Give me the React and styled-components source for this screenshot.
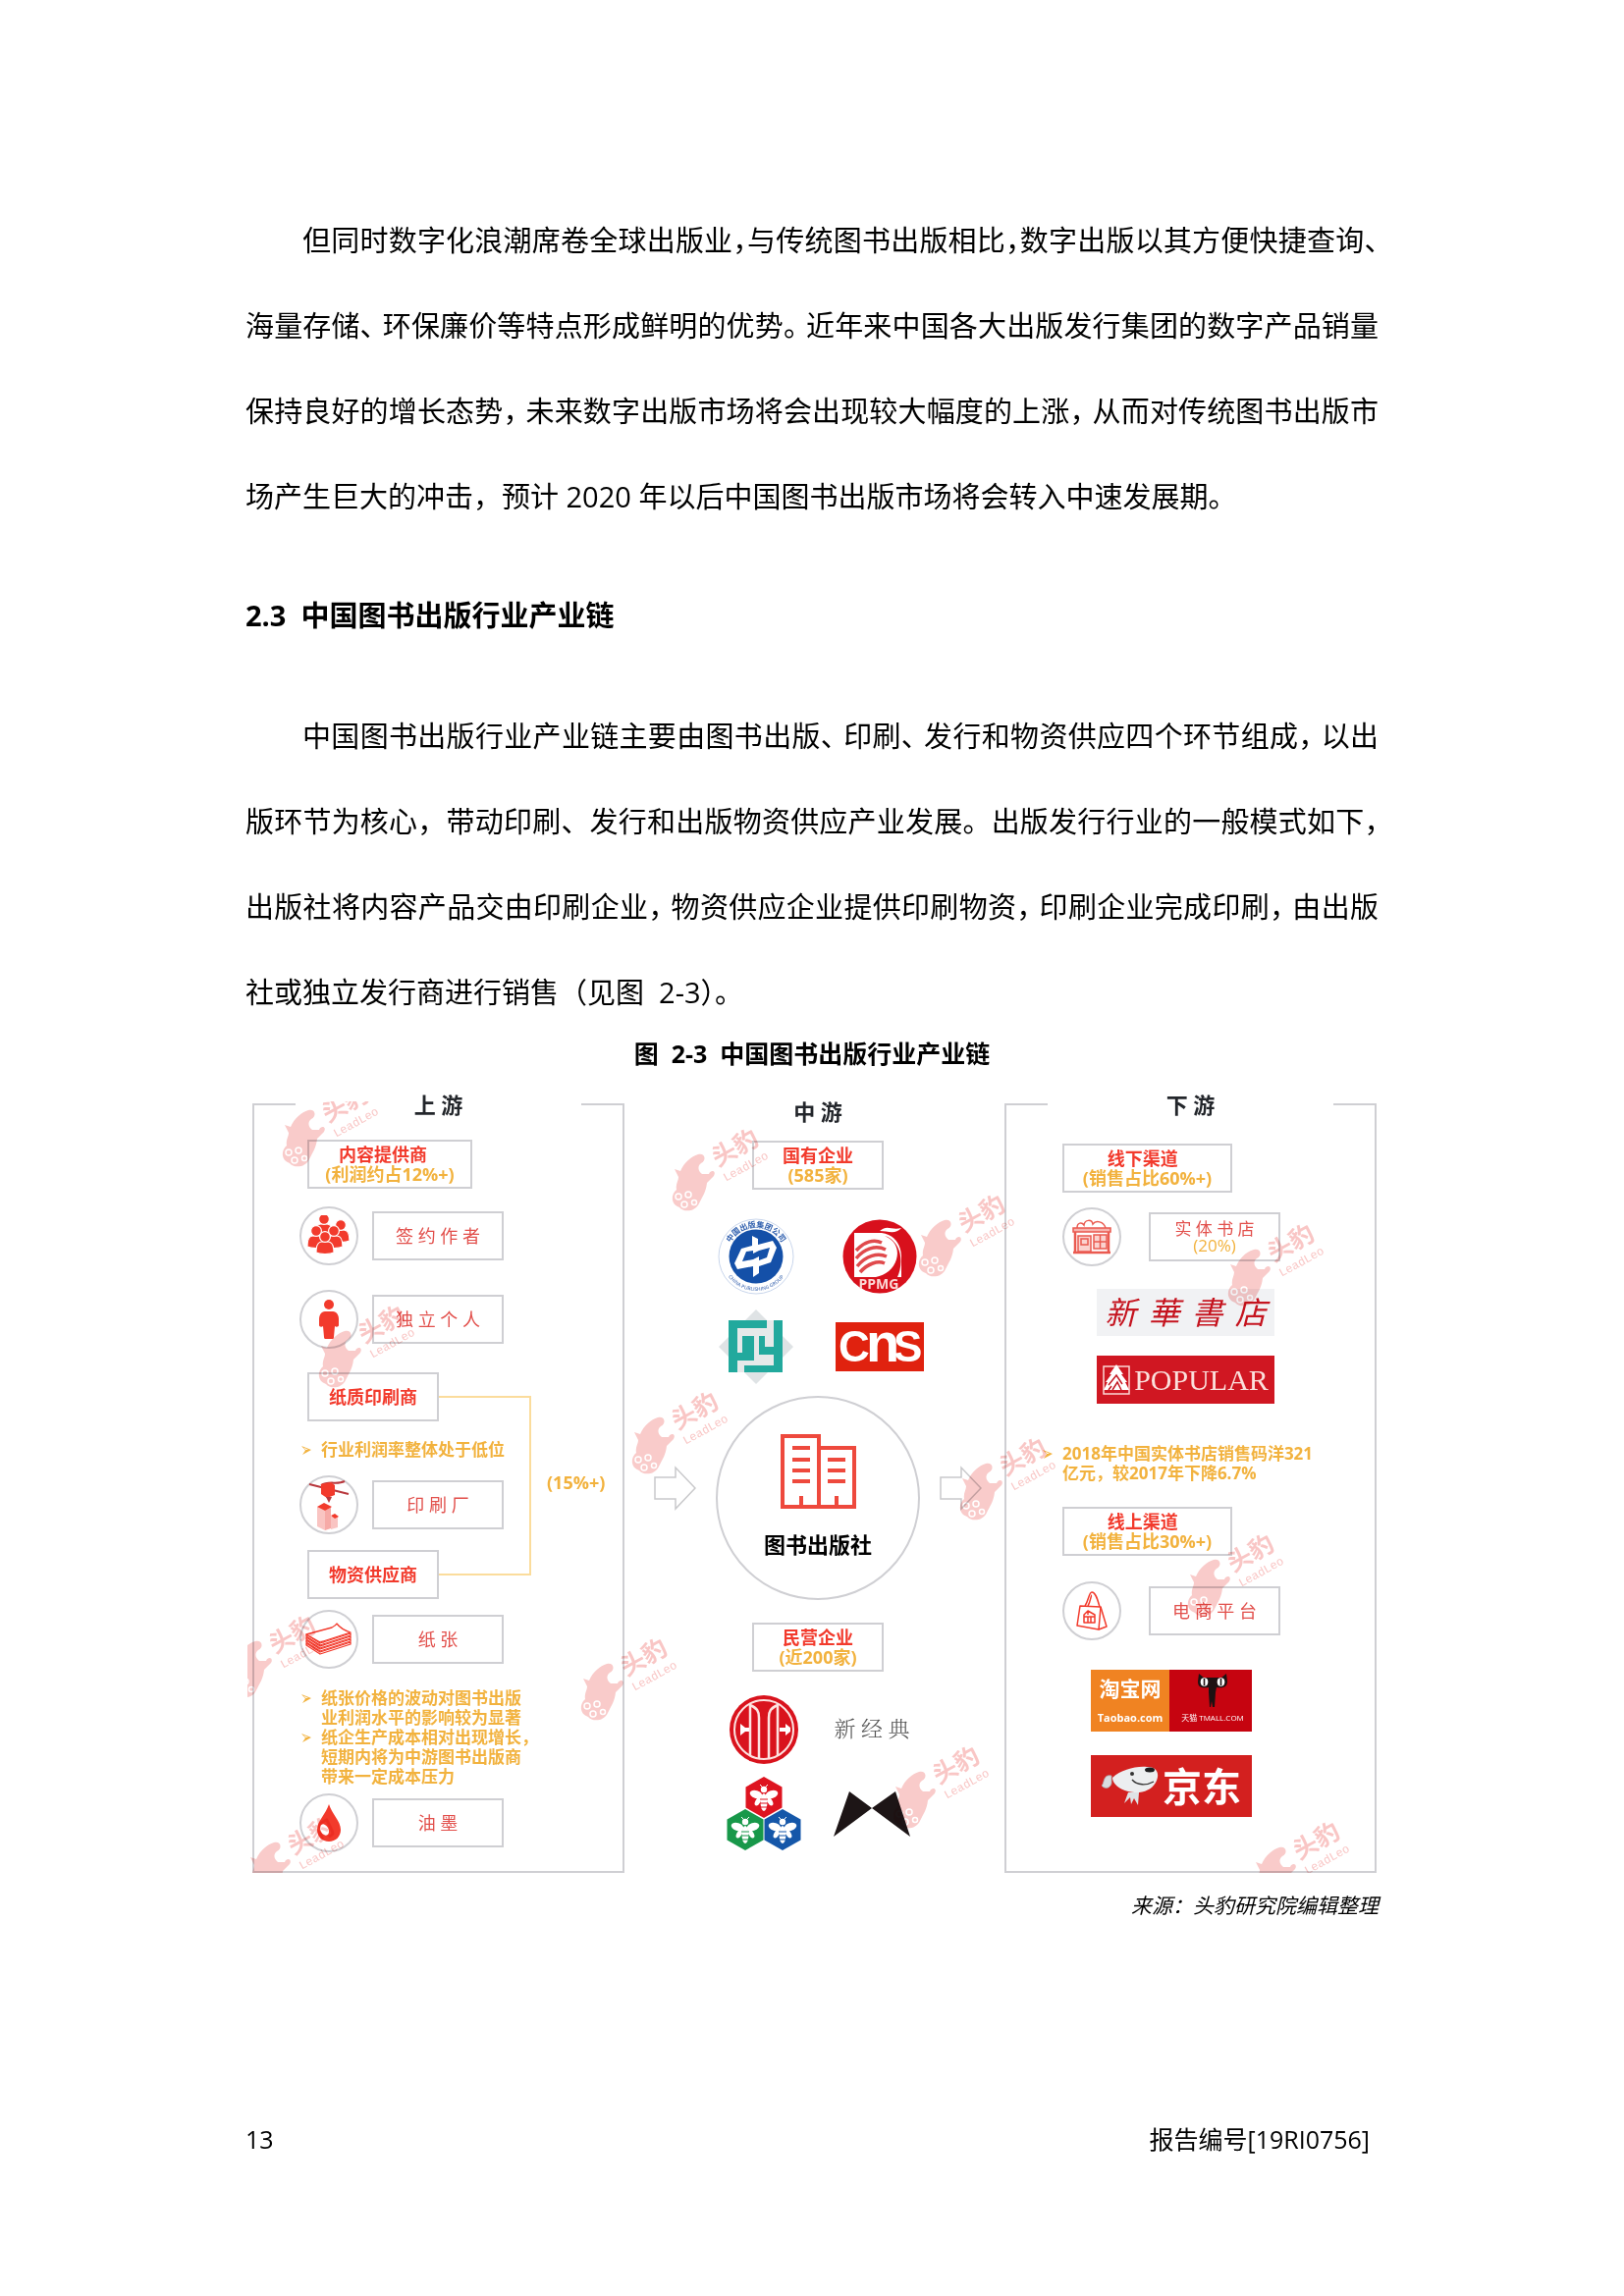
import React from "react";
import styled, { createGlobalStyle } from "styled-components";

const red = "#f23a2c";
const softRed = "#e2504c";
const amber = "#f2b23e";
const line = "#cfcfd3";

const GlobalStyle = createGlobalStyle`
  body {
    margin: 0;
    background: #fff;
    color: #000;
    font-family: "Open Sans", "Noto Sans CJK SC", sans-serif;
  }
`;

const Page = styled.main`
  max-width: 1154px;
  margin: 0 auto;
  padding: 201px 0 140px;
`;

const Paragraph = styled.p`
  margin: 0;
  font-size: 29px;
  line-height: 87px;
  text-indent: 2em;
  text-align: justify;
`;

/* Punctuation set narrower than a full em, as in justified Chinese text. */
const Mark = styled.span`
  margin-right: -6px;
`;

/* Punctuation set on half an em. */
const HalfMark = styled.span`
  font-feature-settings: "halt";
`;

const Heading = styled.h2`
  margin: 56px 0 58px;
  font-size: 29px;
  line-height: 43px;
  font-weight: 700;
`;

const Figure = styled.figure`
  display: flex;
  flex-direction: column;
  margin: 0;
`;

const Caption = styled.figcaption`
  margin-bottom: 20px;
  font-size: 25px;
  line-height: 38px;
  font-weight: 700;
  text-align: center;
`;

const Chain = styled.div`
  position: relative;
  display: grid;
  grid-template-columns: 379fr 387fr 379fr;
  margin: 0 2px 0 7px;
`;

const Panel = styled.section`
  display: flex;
  flex-direction: column;
`;

const PanelHead = styled.header`
  display: grid;
  grid-template-columns: 44px 1fr 44px;
  align-items: center;
  margin-bottom: -14px;
`;

const Stub = styled.span`
  height: 2px;
  background: ${line};
`;

const StageTitle = styled.h3`
  margin: 0;
  font-size: 22px;
  line-height: 26px;
  font-weight: 700;
  color: #23262b;
  text-align: center;
`;

const PanelBody = styled.div`
  flex: 1;
  display: flex;
  flex-direction: column;
  align-items: flex-start;
  border: solid ${line};
  border-width: 0 2px 2px;
  padding: ${(p) => p.$pad};
`;

const Middle = styled.section`
  display: flex;
  flex-direction: column;
  align-items: center;
  padding: 7px 0 0 7px;
`;

const Box = styled.div`
  box-sizing: border-box;
  display: flex;
  flex-direction: column;
  align-items: center;
  justify-content: center;
  width: ${(p) => p.$width || "134px"};
  height: 50px;
  margin-top: ${(p) => p.$top || "0"};
  margin-left: ${(p) => p.$inset || "0"};
  border: 2px solid ${line};
  font-size: 18px;
  line-height: 20px;
  font-weight: ${(p) => (p.$plain ? 400 : 700)};
  color: ${(p) => (p.$plain ? softRed : red)};
  white-space: nowrap;
`;

const Share = styled.span`
  color: ${amber};
`;

const Tight = styled.span`
  font-size: 17px;
  line-height: 17px;
  color: ${(p) => (p.$amber ? amber : "inherit")};
`;

const Row = styled.div`
  display: flex;
  align-items: center;
  gap: ${(p) => p.$gap || "14px"};
  margin-top: ${(p) => p.$top};
`;

const Disc = styled.span`
  box-sizing: border-box;
  display: grid;
  place-items: center;
  width: 60px;
  height: 60px;
  border: 2px solid ${line};
  border-radius: 50%;
`;

const Notes = styled.ul`
  list-style: none;
  width: ${(p) => p.$width};
  margin: ${(p) => p.$top} 0 0 ${(p) => p.$inset};
  padding: 0;
  font-size: 17px;
  line-height: 20px;
  font-weight: 700;
  color: ${amber};
`;

const Note = styled.li`
  display: grid;
  grid-template-columns: 20px 1fr;
  svg {
    margin-top: 6px;
  }
`;

const Linked = styled.div`
  position: relative;
  align-self: stretch;
  margin-top: 24px;
`;

const Bracket = styled.div`
  position: absolute;
  top: 24px;
  bottom: 24px;
  left: 142px;
  width: 92px;
  border: 2px solid #fbdc9c;
  border-left: 0;
`;

const BracketLabel = styled.span`
  position: absolute;
  top: 100px;
  left: 252px;
  font-size: 18px;
  line-height: 24px;
  font-weight: 700;
  color: ${amber};
`;

const Logos = styled.div`
  display: grid;
  grid-template-columns: repeat(2, ${(p) => p.$col});
  grid-template-rows: ${(p) => p.$rows};
  place-items: center;
  margin-top: ${(p) => p.$top};
`;

const Hub = styled.div`
  display: flex;
  align-items: center;
  gap: 20px;
  margin-top: 4px;
`;

const ArrowSlot = styled.span`
  display: flex;
  padding-bottom: 20px;
`;

const HubDisc = styled.div`
  box-sizing: border-box;
  display: flex;
  flex-direction: column;
  align-items: center;
  gap: 21px;
  width: 208px;
  height: 208px;
  padding-top: 37px;
  border: 2px solid ${line};
  border-radius: 50%;
  font-size: 22px;
  line-height: 30px;
  font-weight: 700;
`;

const Wordmark = styled.span`
  font-family: "Liberation Serif", "Noto Serif CJK SC", "Noto Sans CJK SC", serif;
  font-size: 22px;
  line-height: 30px;
  font-weight: 300;
  color: #555;
`;

const Banner = styled.div`
  box-sizing: border-box;
  display: flex;
  align-items: center;
  justify-content: ${(p) => p.$justify || "center"};
  gap: 4px;
  width: ${(p) => p.$width};
  height: ${(p) => p.$height};
  margin: ${(p) => p.$top} 0 0 ${(p) => p.$inset};
  background: ${(p) => p.$bg};
  color: ${(p) => p.$color || "#fff"};
`;

const Brush = styled.span`
  font-size: 32px;
  line-height: 40px;
  font-style: italic;
`;

const PopularText = styled.span`
  font-family: "Liberation Serif", serif;
  font-size: 30px;
  line-height: 40px;
`;

const Half = styled.div`
  flex: 1;
  align-self: stretch;
  display: flex;
  flex-direction: column;
  align-items: center;
  justify-content: space-between;
  box-sizing: border-box;
  padding: ${(p) => p.$pad};
  background: ${(p) => p.$bg};
  white-space: nowrap;
`;

const BrandText = styled.span`
  font-size: ${(p) => p.$size};
  line-height: 1;
  font-weight: ${(p) => p.$weight || 700};
`;

const WatermarkLayer = styled.div`
  position: absolute;
  inset: 10px -2px 0 -5px;
  overflow: hidden;
  pointer-events: none;
  mix-blend-mode: multiply;
`;

const MarkSlot = styled.svg`
  position: absolute;
  overflow: visible;
`;

const Source = styled.p`
  margin: 18px 0 0;
  font-size: 21px;
  line-height: 30px;
  font-style: italic;
  text-align: right;
`;

const Footer = styled.footer`
  display: flex;
  justify-content: space-between;
  margin-top: 205px;
  padding-right: 9px;
  font-size: 25px;
  line-height: 36px;
`;

const Bullet = () => (
  <svg width="10" height="9" viewBox="0 0 10 9" aria-hidden="true">
    <path d="M0 0 L10 4 L1 9 L4 4.5 Z" fill={amber} />
    <path d="M1.6 1.4 L7 3.8 L4.4 3.9 Z" fill="#fff" />
  </svg>
);

const Person = ({ x, y }) => (
  <g transform={`translate(${x} ${y})`} stroke="#fff" strokeWidth="1.2">
    <path d="M-9 20 C-9 12 -7 9 -3 9 L3 9 C7 9 9 12 9 20 C5 22 -5 22 -9 20 Z" />
    <circle cx="0" cy="4" r="5.4" />
  </g>
);

const PeopleIcon = () => (
  <svg width="46" height="42" viewBox="0 0 46 42" fill={red} aria-hidden="true">
    <Person x={18} y={0} />
    <Person x={35} y={6} />
    <Person x={10} y={12} />
    <Person x={28} y={12} />
    <Person x={19} y={18} />
  </svg>
);

const ManIcon = () => (
  <svg width="22" height="42" viewBox="0 0 22 42" fill={red} aria-hidden="true">
    <circle cx="11" cy="6" r="5" />
    <path d="M7 13 H15 C19 13 21 17 21 21 V27 C21 29 18 29 17 28 L16 39 C16 41 15 41 14 41 H8 C7 41 6 41 6 39 L5 28 C4 29 1 29 1 27 V21 C1 17 3 13 7 13 Z" />
  </svg>
);

const PrinterIcon = () => (
  <svg width="44" height="52" viewBox="0 0 44 52" aria-hidden="true">
    <path d="M2 5 L42 15 M14 6 C22 1 30 6 38 2" stroke="#b8373c" strokeWidth="2" fill="none" />
    <path d="M14 5 L24 3 L28 6 V16 L20 19 L14 15 Z" fill={red} />
    <path d="M19 18 H25 L22 24 Z" fill="#b8373c" />
    <path d="M10 28 L18 32 V52 L10 48 Z" fill="#f9c4c2" />
    <path d="M18 32 L24 28 V50 L18 52 Z" fill="#f6aaa7" />
    <path d="M10 28 L17 24 L25 28 L18 32 Z" fill={red} />
    <path d="M24 38 L31 38 V49 L24 51 Z" fill="#f9c4c2" />
    <path d="M24 37 L28 35 L32 38 L28 40 Z" fill={red} />
  </svg>
);

const PaperIcon = () => (
  <svg width="48" height="34" viewBox="0 0 48 34" fill="#fff" stroke={red} strokeWidth="1.3" strokeLinejoin="round" aria-hidden="true">
    {[12, 9, 6, 3].map((d) => (
      <path key={d} d={`M1 ${11 + d} L15 ${20 + d} L46 ${10 + d} V${8 + d} L15 ${18 + d} L1 ${9 + d} Z`} />
    ))}
    <path d="M1 12 L27 5 C29 4 31 3 32 1 C35 5 40 8 46 10 L15 20 Z" />
  </svg>
);

const DropIcon = () => (
  <svg width="26" height="40" viewBox="0 0 26 40" aria-hidden="true">
    <path d="M13 1 C16 11 25 18 25 27 C25 34 20 39 13 39 C6 39 1 34 1 27 C1 18 10 11 13 1 Z" fill={red} />
    <ellipse cx="8.5" cy="27" rx="4" ry="6" fill="#fff" transform="rotate(-28 8.5 27)" />
  </svg>
);

const ShopIcon = () => (
  <svg width="40" height="36" viewBox="0 0 40 36" fill="none" stroke="#ea5a50" strokeWidth="1.5" aria-hidden="true">
    <path d="M5 9 C5 3 10 3 12 6 C13 0 20 0 21 5 C24 1 32 2 34 9" />
    <path d="M1 9 H39 V13 H1 Z" fill="#f7b3ae" />
    <path d="M3 13 V33 M37 13 V33 M1 34 H39" strokeWidth="2.5" />
    <rect x="6" y="17" width="13" height="16" fill="#fbd2cf" />
    <rect x="9" y="20" width="7" height="6" />
    <rect x="22" y="16" width="13" height="14" fill="#fbd2cf" />
    <path d="M28.5 16 V30 M22 23 H35" />
  </svg>
);

const BagIcon = () => (
  <svg width="32" height="40" viewBox="0 0 32 40" fill="none" stroke={red} strokeWidth="1.5" strokeLinejoin="round" aria-hidden="true">
    <path d="M4 15 L25 16 L23 39 L1 35 Z" />
    <path d="M25 16 L31 36 L23 39" />
    <path d="M9 15 C13 9 13 1 16 1 C20 1 22 9 24 16 M12 15 C15 10 15 4 16 4" />
    <path d="M8 24 L12 20 L19 24 V32 H8 Z M8 26 H19 M12 26 V32 M15 26 V32 M12 20 V24" />
  </svg>
);

const BuildingIcon = () => (
  <svg width="77" height="76" viewBox="0 0 77 76" fill="none" stroke="#ee493d" strokeWidth="4" aria-hidden="true">
    <path d="M2 2 H39 V74 H2 Z M39 14 H75 V74 H39" />
    <path d="M12 14 H30 M12 26 H30 M12 37 H30 M12 48 H30 M48 26 H66 M48 37 H66 M48 48 H66" />
    <path d="M21 63 V74 M57 63 V74" />
  </svg>
);

const Arrow = () => (
  <svg width="43" height="46" viewBox="0 0 43 46" fill="none" stroke="#c9c9cb" strokeWidth="1.5" aria-hidden="true">
    <path d="M1 12 H22 V2 L42 23 L22 44 V34 H1 Z" />
  </svg>
);

const PublishingGroupLogo = () => (
  <svg width="78" height="78" viewBox="0 0 78 78" role="img" aria-label="中国出版集团公司">
    <defs>
      <path id="arc-top" d="M9.5 39 A29.5 29.5 0 0 1 68.5 39" />
      <path id="arc-bottom" d="M4 39 A35 35 0 0 0 74 39" />
    </defs>
    <circle cx="39" cy="39" r="38" fill="#fff" stroke="#c9d6ec" strokeWidth="1" />
    <circle cx="39" cy="39" r="27.5" fill="#1450a8" />
    <text fontSize="8" fontWeight="700" fill="#2f5fae">
      <textPath href="#arc-top" startOffset="50%" textAnchor="middle">中国出版集团公司</textPath>
    </text>
    <text fontSize="5" fontWeight="600" fill="#5b7fbd">
      <textPath href="#arc-bottom" startOffset="50%" textAnchor="middle">CHINA PUBLISHING GROUP</textPath>
    </text>
    <path d="M35 18 L41 21 V27 L56 23 L60 30 L54 45 L42 49 V56 L36 60 V49 L20 52 L17 46 L24 31 L35 28 Z M36 33 L29 34 L25 44 L36 42 L42 39 V43 L50 40 L53 30 L42 33 L36 36 Z" fill="#fff" fillRule="evenodd" />
  </svg>
);

const PpmgLogo = () => (
  <svg width="76" height="78" viewBox="0 0 76 78" role="img" aria-label="PPMG">
    <circle cx="38" cy="39" r="37.5" fill="#d8101c" />
    <path d="M12 15 H40 C54 17 60 28 60 40 V60 H12 Z" fill="#fff" />
    <path d="M40 17 C54 21 58 32 55 42 C52 52 44 58 34 60 H56 C62 48 62 22 40 17 Z" fill="#d8101c" />
    <path d="M14 33 C22 24 32 21 40 25 M14 41 C22 31 34 27 44 32 M15 49 C24 38 36 35 45 39 M18 55 C26 46 36 43 43 46" fill="none" stroke="#e04a4c" strokeWidth="3.5" />
    <path d="M38 13 C46 6 50 13 60 10 C54 17 46 13 38 13 Z" fill="#fff" />
    <text x="37" y="72" fontSize="14" fontWeight="700" fill="#fbd9d6" textAnchor="middle">PPMG</text>
  </svg>
);

const TealLogo = () => (
  <svg width="76" height="76" viewBox="0 0 76 76" aria-hidden="true">
    <path d="M38 0 L50 12 H26 Z M38 76 L50 64 H26 Z M0 38 L11 27 V49 Z M76 38 L65 27 V49 Z" fill="#dfe3e5" />
    <rect x="10" y="11" width="55" height="53" fill="#e6e9e9" />
    <path d="M10 11 H49 V19 H19 V44 H24 V27 H36 V52 H19 V64 H10 Z" fill="#22a99d" />
    <path d="M56 11 H65 V64 H26 V57 H56 V46 H41 V27 H47 V38 H56 Z" fill="#22a99d" />
  </svg>
);

const CnsLogo = () => (
  <svg width="90" height="50" viewBox="0 0 90 50" role="img" aria-label="CnS">
    <rect width="90" height="50" fill="#e0220f" />
    <g fontFamily="Liberation Sans, sans-serif" fontWeight="700" fill="#fff">
      <text x="3" y="40" fontSize="44">C</text>
      <text x="31" y="40" fontSize="56">n</text>
      <text x="59" y="40" fontSize="44">S</text>
    </g>
  </svg>
);

const CiticLogo = () => (
  <svg width="72" height="72" viewBox="0 0 72 72" aria-hidden="true">
    <circle cx="36" cy="36" r="35" fill="#d9131d" />
    <circle cx="36" cy="36" r="30" fill="none" stroke="#fde3e1" strokeWidth="2" />
    <g fill="none" stroke="#fde3e1" strokeWidth="2.5">
      <path d="M22 63 V11 C29 14 31 17 31 24 V66" />
      <path d="M50 63 V11 C43 14 41 17 41 24 V66" />
    </g>
    <path d="M12 30 L17 34 H21 V38 H17 L12 42 Z M58 30 L63 34 V38 L58 42 L58 38 H52 V34 H58 Z" fill="#fff" />
  </svg>
);

const Bee = ({ x, y, fill }) => (
  <g transform={`translate(${x} ${y})`}>
    <path d="M0 -21 L18.5 -10.5 V10.5 L0 21 L-18.5 10.5 V-10.5 Z" fill={fill} />
    <g fill="#fff">
      <circle cx="0" cy="-8" r="3.2" />
      <ellipse cx="-8" cy="-3" rx="6.5" ry="4" transform="rotate(18 -8 -3)" />
      <ellipse cx="8" cy="-3" rx="6.5" ry="4" transform="rotate(-18 8 -3)" />
      <ellipse cx="-6" cy="4" rx="2.5" ry="5" transform="rotate(30 -6 4)" />
      <ellipse cx="6" cy="4" rx="2.5" ry="5" transform="rotate(-30 6 4)" />
      <ellipse cx="0" cy="5" rx="3.5" ry="9" />
    </g>
    <path d="M-4 2 H4 M-4 6 H4 M-4 10 H4" stroke={fill} strokeWidth="1.2" />
    <path d="M-4 -13 L-1 -10 M4 -13 L1 -10" stroke="#fff" strokeWidth="1" />
  </g>
);

const BeesLogo = () => (
  <svg width="76" height="76" viewBox="0 0 76 76" aria-hidden="true">
    <Bee x={38} y={21} fill="#de1420" />
    <Bee x={19} y={54} fill="#18984a" />
    <Bee x={57} y={54} fill="#1557a9" />
  </svg>
);

const BowLogo = () => (
  <svg width="78" height="46" viewBox="0 0 78 46" aria-hidden="true">
    <path d="M0 46 L16 0 L39 17 Z M78 46 L63 0 L39 17 Z" fill="#1d1516" />
  </svg>
);

const TreeLogo = () => (
  <svg width="28" height="32" viewBox="0 0 28 32" aria-hidden="true">
    <rect x="1" y="2" width="26" height="28" fill="none" stroke="#fbd9d6" strokeWidth="1.5" />
    <path d="M14 0 L21 10 L19 10 L25 18 L23 18 L27 26 L1 26 L5 18 L3 18 L9 10 L7 10 Z" fill="#fff" />
    <path d="M6 21 L14 11 L20 20 M10 26 L15 18 L19 26 M6 26 L9 22" fill="none" stroke="#c41822" strokeWidth="1.5" />
  </svg>
);

const CatIcon = () => (
  <svg width="32" height="36" viewBox="0 0 32 36" aria-hidden="true">
    <path d="M2 0 L7 4 H25 L30 0 L31 8 C31 14 26 15 20 14 L19 19 L18 34 H16 L15 28 L14 34 H13 L12 19 L12 14 C5 15 1 14 1 8 Z" fill="#1e1112" />
    <ellipse cx="7.5" cy="8.5" rx="3.8" ry="4.2" fill="#fff" />
    <ellipse cx="24.5" cy="8.5" rx="3.8" ry="4.2" fill="#fff" />
    <path d="M7.5 5 V12 M24.5 5 V12" stroke="#1e1112" strokeWidth="1.6" />
  </svg>
);

const DogLogo = () => (
  <svg width="58" height="42" viewBox="0 0 58 42" aria-hidden="true">
    <path d="M10 10 C1 8 3 18 0 20 C2 23 8 24 10 18 Z" fill="#d9dcdf" stroke="#a9adb2" strokeWidth="0.8" />
    <path d="M11 12 C20 4 34 0 46 1 C56 0 60 8 55 17 C50 26 38 29 27 26 C18 24 11 18 11 12 Z" fill="#eceef0" />
    <path d="M27 27 L23 38 L29 32 L30 39 L33 33 L37 40 L38 27 Z" fill="#dfe2e5" />
    <ellipse cx="49" cy="4" rx="5" ry="2.5" fill="#1d1d1f" />
    <circle cx="31" cy="8" r="2" fill="#333" />
    <path d="M31 14 C36 20 46 20 53 16" stroke="#333" strokeWidth="1.3" fill="none" />
  </svg>
);

const watermarks = [
  [432, 26], [35, -19], [72, 206], [683, 93], [391, 294], [725, 341], [998, 123],
  [957, 439], [-19, 522], [339, 545], [0, 727], [657, 655], [1024, 732],
];

const Watermark = ({ x, y }) => (
  <MarkSlot width="104" height="90" viewBox="0 0 104 90" style={{ left: x, top: y }} aria-hidden="true">
    <path d="M3 43 L9 45 C13 36 20 30 27 28 C34 26 36 34 30 37 C26 40 27 45 31 48 L38 48 C40 43 46 45 43 50 L36 57 C35 66 32 70 28 78 C24 87 12 87 8 82 C-1 79 -1 69 5 64 C4 58 7 55 7 51 Z" fill="#f9cbca" />
    <g fill="none" stroke="#fff" strokeWidth="1.5">
      <circle cx="7" cy="71" r="3" />
      <circle cx="17" cy="69" r="3" />
      <circle cx="13" cy="79" r="3" />
      <circle cx="23" cy="77" r="2.5" />
    </g>
    <g transform="translate(47 41) rotate(-29)" fill="#f9c6c5">
      <text x="0" y="0" fontSize="25" fontWeight="700">头豹</text>
      <text x="0" y="17" fontFamily="Liberation Mono, monospace" fontSize="12">LeadLeo</text>
    </g>
  </MarkSlot>
);

export default function App() {
  return (
    <>
      <GlobalStyle />
      <Page lang="zh-CN">
        <Paragraph>
          但同时数字化浪潮席卷全球出版业<HalfMark>，</HalfMark>与传统图书出版相比<HalfMark>，</HalfMark>数字出版以其方便快捷查询<HalfMark>、</HalfMark>海量存储<Mark>、</Mark>环保廉价等特点形成鲜明的优势<Mark>。</Mark>近年来中国各大出版发行集团的数字产品销量保持良好的增长态势<Mark>，</Mark>未来数字出版市场将会出现较大幅度的上涨<Mark>，</Mark>从而对传统图书出版市场产生巨大的冲击，预计 2020 年以后中国图书出版市场将会转入中速发展期。
        </Paragraph>
        <Heading>2.3&nbsp; 中国图书出版行业产业链</Heading>
        <Paragraph>
          中国图书出版行业产业链主要由图书出版<Mark>、</Mark>印刷<Mark>、</Mark>发行和物资供应四个环节组成<Mark>，</Mark>以出版环节为核心，带动印刷、发行和出版物资供应产业发展。出版发行行业的一般模式如下<HalfMark>，</HalfMark>出版社将内容产品交由印刷企业<Mark>，</Mark>物资供应企业提供印刷物资<Mark>，</Mark>印刷企业完成印刷<Mark>，</Mark>由出版社或独立发行商进行销售（见图&nbsp; 2-3）。
        </Paragraph>

        <Figure>
          <Caption>图&nbsp; 2-3&nbsp; 中国图书出版行业产业链</Caption>
          <Chain>
            <Panel>
              <PanelHead>
                <Stub />
                <StageTitle>上 游</StageTitle>
                <Stub />
              </PanelHead>
              <PanelBody $pad="37px 0 18px 46px">
                <Box $width="168px" $inset="8px">
                  <span>内容提供商&nbsp;&nbsp;&nbsp;</span>
                  <Share>(利润约占12%+)</Share>
                </Box>
                <Row $top="18px">
                  <Disc><PeopleIcon /></Disc>
                  <Box $plain>签 约 作 者</Box>
                </Row>
                <Row $top="25px">
                  <Disc><ManIcon /></Disc>
                  <Box $plain>独 立 个 人</Box>
                </Row>
                <Linked>
                  <Box $inset="8px">纸质印刷商</Box>
                  <Notes $top="19px" $inset="2px" $width="234px">
                    <Note><Bullet /><span>行业利润率整体处于低位</span></Note>
                  </Notes>
                  <Row $top="16px">
                    <Disc><PrinterIcon /></Disc>
                    <Box $plain>印 刷 厂</Box>
                  </Row>
                  <Box $top="16px" $inset="8px">物资供应商</Box>
                  <Bracket />
                  <BracketLabel>(15%+)</BracketLabel>
                </Linked>
                <Row $top="11px">
                  <Disc><PaperIcon /></Disc>
                  <Box $plain>纸 张</Box>
                </Row>
                <Notes $top="20px" $inset="2px" $width="234px">
                  <Note><Bullet /><span>纸张价格的波动对图书出版业利润水平的影响较为显著</span></Note>
                  <Note><Bullet /><span>纸企生产成本相对出现增长<HalfMark>，</HalfMark>短期内将为中游图书出版商带来一定成本压力</span></Note>
                </Notes>
                <Row $top="7px">
                  <Disc><DropIcon /></Disc>
                  <Box $plain>油 墨</Box>
                </Row>
              </PanelBody>
            </Panel>

            <Middle>
              <StageTitle>中 游</StageTitle>
              <Box $top="17px">
                国有企业
                <Share>(585家)</Share>
              </Box>
              <Logos $col="126px" $rows="92px 92px" $top="22px">
                <PublishingGroupLogo />
                <PpmgLogo />
                <TealLogo />
                <CnsLogo />
              </Logos>
              <Hub>
                <ArrowSlot><Arrow /></ArrowSlot>
                <HubDisc>
                  <BuildingIcon />
                  图书出版社
                </HubDisc>
                <ArrowSlot><Arrow /></ArrowSlot>
              </Hub>
              <Box $top="23px">
                民营企业
                <Share>(近200家)</Share>
              </Box>
              <Logos $col="110px" $rows="86px 86px" $top="16px">
                <CiticLogo />
                <Wordmark>新 经 典</Wordmark>
                <BeesLogo />
                <BowLogo />
              </Logos>
            </Middle>

            <Panel>
              <PanelHead>
                <Stub />
                <StageTitle>下 游</StageTitle>
                <Stub />
              </PanelHead>
              <PanelBody $pad="41px 0 55px 57px">
                <Box $width="173px">
                  <span>线下渠道&nbsp;&nbsp;</span>
                  <Share>(销售占比60%+)</Share>
                </Box>
                <Row $top="15px" $gap="28px">
                  <Disc><ShopIcon /></Disc>
                  <Box $plain>
                    <Tight>实 体 书 店</Tight>
                    <Tight $amber>(20%)</Tight>
                  </Box>
                </Row>
                <Banner $width="181px" $height="48px" $top="23px" $inset="35px" $bg="#f1f2f4" $color="#c5141f" $justify="space-evenly">
                  <Brush>新</Brush>
                  <Brush>華</Brush>
                  <Brush>書</Brush>
                  <Brush>店</Brush>
                </Banner>
                <Banner $width="181px" $height="49px" $top="20px" $inset="35px" $bg="#d01722" $color="#fbe0dc">
                  <TreeLogo />
                  <PopularText>POPULAR</PopularText>
                </Banner>
                <Notes $top="41px" $inset="-20px" $width="284px">
                  <Note><Bullet /><span>2018年中国实体书店销售码洋321亿元，较2017年下降6.7%</span></Note>
                </Notes>
                <Box $width="173px" $top="24px">
                  <span>线上渠道&nbsp;&nbsp;</span>
                  <Share>(销售占比30%+)</Share>
                </Box>
                <Row $top="26px" $gap="28px">
                  <Disc><BagIcon /></Disc>
                  <Box $plain>电 商 平 台</Box>
                </Row>
                <Banner $width="164px" $height="63px" $top="30px" $inset="29px" $bg="#c60410">
                  <Half $bg="#f08322" $pad="9px 0 9px">
                    <BrandText $size="21px">淘宝网</BrandText>
                    <BrandText $size="11px">Taobao.com</BrandText>
                  </Half>
                  <Half $bg="#c60410" $pad="4px 0 10px">
                    <CatIcon />
                    <BrandText $size="8px" $weight="400">天猫 TMALL.COM</BrandText>
                  </Half>
                </Banner>
                <Banner $width="164px" $height="63px" $top="24px" $inset="29px" $bg="#d3201f">
                  <DogLogo />
                  <BrandText $size="40px">京东</BrandText>
                </Banner>
              </PanelBody>
            </Panel>

            <WatermarkLayer>
              {watermarks.map(([x, y]) => (
                <Watermark key={`${x}-${y}`} x={x} y={y} />
              ))}
            </WatermarkLayer>
          </Chain>
          <Source>来源：头豹研究院编辑整理</Source>
        </Figure>

        <Footer>
          <span>13</span>
          <span>报告编号[19RI0756]</span>
        </Footer>
      </Page>
    </>
  );
}
